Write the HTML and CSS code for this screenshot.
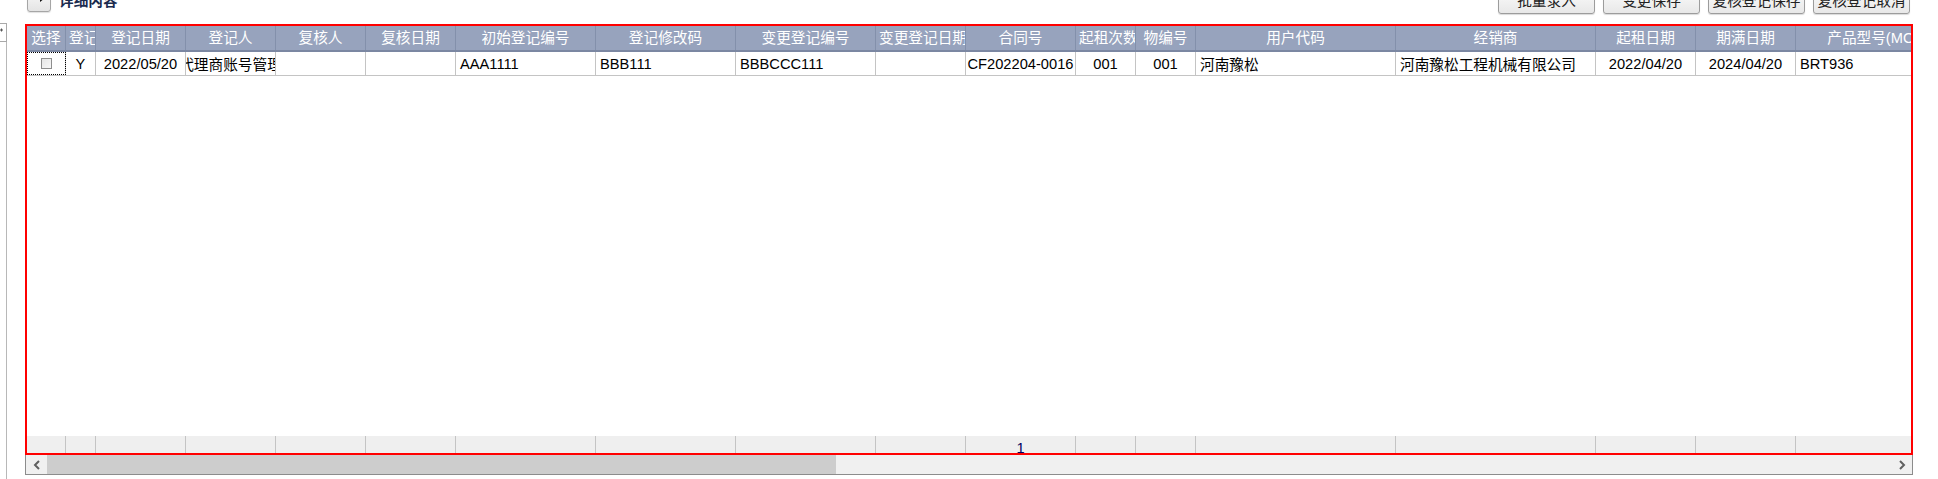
FILE: index.html
```html
<!DOCTYPE html>
<html lang="zh-CN">
<head>
<meta charset="utf-8">
<title>详细内容</title>
<link rel="stylesheet" href="styles.css">
</head>
<body>
<div class="page">
  <div class="side">
    <div class="side-box">
      <svg class="side-mark" width="6" height="10" viewBox="0 0 6 10"><path d="M0 5h3M1.5 3.5v3" stroke="#555" stroke-width="1" fill="none"/></svg>
    </div>
    <div class="side-line"></div>
  </div>
  <div class="main">
    <div class="toolbar">
      <div class="tb-left">
        <button class="icon-btn" type="button">
          <svg width="14" height="10" viewBox="0 0 14 10"><path d="M1 4h7V1l5 4-5 4V6H1z" fill="#111"/></svg>
        </button>
        <span class="title">详细内容</span>
      </div>
      <div class="tb-right">
        <button class="btn" type="button">批量录入</button>
        <button class="btn" type="button">变更保存</button>
        <button class="btn" type="button">复核登记保存</button>
        <button class="btn" type="button">复核登记取消</button>
      </div>
    </div>
    <div class="grid">
      <div class="row head">
        <div class="cell w39">选择</div>
        <div class="cell w30">登记</div>
        <div class="cell w90">登记日期</div>
        <div class="cell w90">登记人</div>
        <div class="cell w90">复核人</div>
        <div class="cell w90">复核日期</div>
        <div class="cell w140">初始登记编号</div>
        <div class="cell w140">登记修改码</div>
        <div class="cell w140">变更登记编号</div>
        <div class="cell w90">变更登记日期</div>
        <div class="cell w110">合同号</div>
        <div class="cell w60">起租次数</div>
        <div class="cell w60">物编号</div>
        <div class="cell w200">用户代码</div>
        <div class="cell w200">经销商</div>
        <div class="cell w100">起租日期</div>
        <div class="cell w100">期满日期</div>
        <div class="cell w184">产品型号(MODEL)</div>
        <div class="cell w100">备注</div>
      </div>
      <div class="row data">
        <div class="cell w39 c focus"><span class="chk"></span></div>
        <div class="cell w30 c"><span>Y</span></div>
        <div class="cell w90 c"><span>2022/05/20</span></div>
        <div class="cell w90 c"><span>代理商账号管理</span></div>
        <div class="cell w90 c"></div>
        <div class="cell w90 c"></div>
        <div class="cell w140"><span>AAA1111</span></div>
        <div class="cell w140"><span>BBB111</span></div>
        <div class="cell w140"><span>BBBCCC111</span></div>
        <div class="cell w90 c"></div>
        <div class="cell w110 c"><span>CF202204-0016</span></div>
        <div class="cell w60 c"><span>001</span></div>
        <div class="cell w60 c"><span>001</span></div>
        <div class="cell w200"><span>河南豫松</span></div>
        <div class="cell w200"><span>河南豫松工程机械有限公司</span></div>
        <div class="cell w100 c"><span>2022/04/20</span></div>
        <div class="cell w100 c"><span>2024/04/20</span></div>
        <div class="cell w184"><span>BRT936</span></div>
        <div class="cell w100"></div>
      </div>
      <div class="fill"></div>
      <div class="row foot">
        <div class="cell w39"></div>
        <div class="cell w30"></div>
        <div class="cell w90"></div>
        <div class="cell w90"></div>
        <div class="cell w90"></div>
        <div class="cell w90"></div>
        <div class="cell w140"></div>
        <div class="cell w140"></div>
        <div class="cell w140"></div>
        <div class="cell w90"></div>
        <div class="cell w110">1</div>
        <div class="cell w60"></div>
        <div class="cell w60"></div>
        <div class="cell w200"></div>
        <div class="cell w200"></div>
        <div class="cell w100"></div>
        <div class="cell w100"></div>
        <div class="cell w184"></div>
        <div class="cell w100"></div>
      </div>
    </div>
    <div class="hscroll">
      <div class="sb-btn">
        <svg width="8" height="10" viewBox="0 0 8 10"><path d="M6 1L2 5l4 4" stroke="#606060" stroke-width="2" fill="none"/></svg>
      </div>
      <div class="thumb"></div>
      <div class="track"></div>
      <div class="sb-btn">
        <svg width="8" height="10" viewBox="0 0 8 10"><path d="M2 1l4 4-4 4" stroke="#606060" stroke-width="2" fill="none"/></svg>
      </div>
    </div>
  </div>
</div>
</body>
</html>
```

FILE: styles.css
```css
* {
  box-sizing: border-box;
}

body {
  margin: 0;
  background: #ffffff;
  font-family: "Liberation Sans", "Noto Sans CJK SC", sans-serif;
  font-size: 14.67px;
  color: #000000;
  overflow: hidden;
}

.page {
  display: flex;
  height: 100vh;
}

/* collapsed side panel */
.side {
  width: 7px;
  flex: none;
  display: flex;
  flex-direction: column;
  padding-top: 23px;
}

.side-box {
  height: 19px;
  border: 1px solid #a9a9a9;
  border-left: none;
  display: flex;
  align-items: flex-start;
  padding-top: 1px;
}

.side-mark {
  display: block;
}

.side-line {
  flex: 1;
  border-right: 1px solid #b8b8b8;
}

.main {
  width: 1888px;
  margin-left: 18px;
  display: flex;
  flex-direction: column;
}

/* toolbar */
.toolbar {
  margin-top: -16px;
  height: 40px;
  display: flex;
  justify-content: space-between;
  align-items: flex-start;
}

.tb-left {
  display: flex;
  align-items: flex-start;
  margin-left: 2px;
}

.icon-btn {
  width: 24px;
  height: 28px;
  padding: 0;
  border: 1px solid #a6a6a6;
  border-radius: 3px;
  background: linear-gradient(#ffffff, #e4e4e4);
  box-shadow: 0 1px 1px rgba(0, 0, 0, 0.12);
  display: flex;
  align-items: center;
  justify-content: center;
}

.title {
  margin-left: 8px;
  margin-top: 8px;
  line-height: 18px;
  font-weight: bold;
  color: #1b2b4e;
}

.tb-right {
  display: flex;
  gap: 8px;
  margin-right: 3px;
}

.btn {
  width: 97px;
  height: 30px;
  padding: 0;
  border: 1px solid #9c9c9c;
  border-radius: 3px;
  background: linear-gradient(#ffffff, #e8e8e8);
  box-shadow: 0 1px 1px rgba(0, 0, 0, 0.15);
  font: inherit;
  color: #222222;
}

/* grid */
.grid {
  height: 431px;
  border: 2px solid #ff0000;
  overflow: hidden;
  display: flex;
  flex-direction: column;
}

.row {
  display: flex;
  flex: none;
}

.cell {
  flex: none;
  overflow: hidden;
  white-space: nowrap;
}

.w39 { width: 39px; }
.w30 { width: 30px; }
.w60 { width: 60px; }
.w90 { width: 90px; }
.w100 { width: 100px; }
.w110 { width: 110px; }
.w140 { width: 140px; }
.w184 { width: 184px; }
.w200 { width: 200px; }

.head {
  height: 26px;
  background: #97a3bd;
  border-bottom: 2px solid #7b87a2;
  color: #ffffff;
}

.head .cell {
  line-height: 24px;
  text-align: center;
  padding: 0 3px;
  border-right: 1px solid #8390ab;
}

.data {
  height: 24px;
  border-bottom: 1px solid #c4c4c4;
}

.data .cell {
  display: flex;
  align-items: center;
  padding: 0 4px;
  border-right: 1px solid #c4c4c4;
}

.data .c {
  justify-content: center;
}

.data .cell > span {
  flex: none;
}

.focus {
  outline: 1px dotted #000000;
  outline-offset: -1px;
}

.chk {
  width: 11px;
  height: 11px;
  border: 1px solid #8e8e8e;
  background: linear-gradient(135deg, #e6e6e6, #f8f8f8);
}

.fill {
  flex: 1;
}

.foot {
  height: 17px;
  background: #efefef;
}

.foot .cell {
  line-height: 24px;
  text-align: center;
  color: #000060;
  border-right: 1px solid #c4c4c4;
}

/* horizontal scrollbar */
.hscroll {
  height: 20px;
  border: 1px solid #8c8c8c;
  border-top: none;
  background: #f0f0f0;
  display: flex;
}

.sb-btn {
  width: 21px;
  flex: none;
  display: flex;
  align-items: center;
  justify-content: center;
}

.thumb {
  width: 789px;
  flex: none;
  background: #cdcdcd;
}

.track {
  flex: 1;
}
```
